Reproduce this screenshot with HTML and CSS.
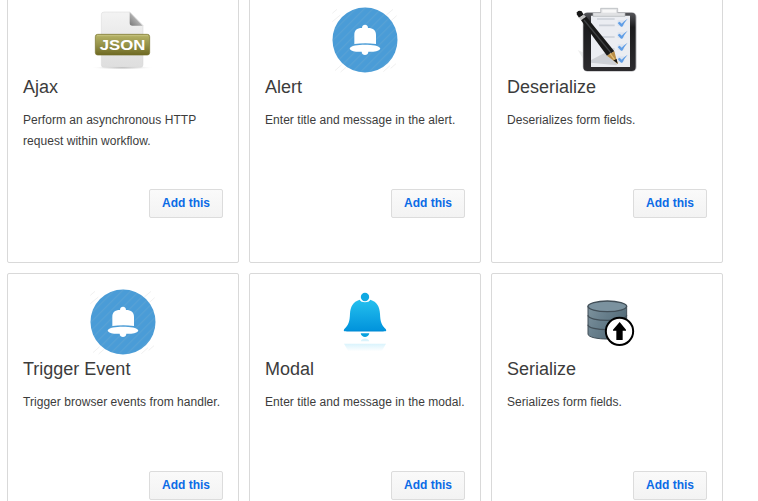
FILE: index.html
```html
<!DOCTYPE html>
<html lang="en">
<head>
<meta charset="utf-8">
<title>Components</title>
<link rel="stylesheet" href="styles.css">
</head>
<body>
<svg width="0" height="0" class="defs" aria-hidden="true">
  <defs>
    <linearGradient id="paper" x2="0" y2="1"><stop stop-color="#f3f3f3"/><stop offset="1" stop-color="#dedede"/></linearGradient>
    <linearGradient id="fold" x1="0" y1="1" x2="1" y2="0"><stop stop-color="#777"/><stop offset=".6" stop-color="#bbb"/></linearGradient>
    <linearGradient id="olive" x2="0" y2="1"><stop stop-color="#b8b567"/><stop offset=".5" stop-color="#96934a"/><stop offset="1" stop-color="#6e6923"/></linearGradient>
    <linearGradient id="cyan" x2="0" y2="1"><stop stop-color="#25c0ee"/><stop offset="1" stop-color="#0092dc"/></linearGradient>
    <linearGradient id="glow" x2="0" y2="1"><stop stop-color="#d9f3fc"/><stop offset="1" stop-color="#fff"/></linearGradient>
    <linearGradient id="steel" y2=".5"><stop stop-color="#7e939e"/><stop offset=".4" stop-color="#6a818e"/><stop offset="1" stop-color="#526a77"/></linearGradient>
    <linearGradient id="board" x2="0" y2="1"><stop stop-color="#55565a"/><stop offset=".25" stop-color="#1b1b1d"/><stop offset="1" stop-color="#2c2b2e"/></linearGradient>
    <radialGradient id="shade"><stop stop-color="#999"/><stop offset="1" stop-color="#fff" stop-opacity="0"/></radialGradient>
    <pattern id="stripes" width="18" height="18" patternUnits="userSpaceOnUse" patternTransform="rotate(45)"><path d="M5 0V18" stroke="#7caed0" stroke-width="3" opacity=".3"/></pattern>
    <g id="round-bell">
      <path d="M37 40l14-12M37 65l24-20M199 45l20-17M210 65l20-18M45 212l20-18M62 216l16-14M190 215l20-18M212 205l16-14" stroke="#f1f1f1" stroke-width="3"/>
      <circle cx="135" cy="120" r="97.5" fill="#4a9cd7"/>
      <circle cx="135" cy="120" r="97.5" fill="url(#stripes)"/>
      <path d="M126 84C126 71 144 71 144 84C160 84 168 91 168 105V132Q135 128 103 132V105C103 91 110 84 126 84Z" fill="#fff"/>
      <path d="M89 146C92 136 113 134 135 134S178 136 181 146C177 154 156 156 145 155C145 168 125 168 125 155C110 156 93 154 89 146Z" fill="#fff"/>
    </g>
    <path id="tick" d="M158 69L164 65L170 71Q178 62 188 56Q178 67 172 80L168 80Z" fill="#5f9de6"/>
  </defs>
</svg>
<main class="catalog">
  <article class="card">
    <svg class="icon" viewBox="-6 0 270 225">
      <ellipse cx="127" cy="203" rx="96" ry="6" fill="url(#shade)"/>
      <path d="M72 36H150L189 76V194Q189 202 181 202H72Q64 202 64 194V44Q64 36 72 36Z" fill="url(#paper)" stroke="#d7d7d7" stroke-width="1.5"/>
      <path d="M149 37L188 77H157Q149 77 149 69Z" fill="url(#fold)"/>
      <rect x="46" y="103" width="163" height="62" rx="7" fill="url(#olive)" stroke="#747028" stroke-width="2"/>
      <path d="M51 107H204" stroke="#cdca8a" stroke-width="3" opacity=".7"/>
      <text x="127.500" y="150" class="json-label" textLength="137" lengthAdjust="spacingAndGlyphs">JSON</text>
    </svg>
    <h2>Ajax</h2>
    <p>Perform an asynchronous HTTP request within workflow.</p>
    <button type="button">Add this</button>
  </article>
  <article class="card">
    <svg class="icon" viewBox="0 0 270 225"><use href="#round-bell"/></svg>
    <h2>Alert</h2>
    <p>Enter title and message in the alert.</p>
    <button type="button">Add this</button>
  </article>
  <article class="card">
    <svg class="icon" viewBox="-9 0 270 225">
      <path d="M38 150L60 160V185Z" fill="#eee"/>
      <rect x="53" y="37" width="162" height="178" rx="14" fill="#c6c6c9"/>
      <rect x="55" y="38" width="157" height="175" rx="12" fill="url(#board)"/>
      <path d="M78 47H195V201H78Z" fill="#ebedf2"/>
      <path d="M78 180L120 158L157 191L154 196L78 188Z" fill="#ced0d5"/>
      <path d="M96 57H149M102 76H149M105 111H149M118 147H149M80 184H149" stroke="#cbd0d8" stroke-width="5"/>
      <path d="M107 38V25H158V38H180V49H84V38Z" fill="#e0e1e3" stroke="#aeb0b3" stroke-width="2"/>
      <path d="M112 29H153V38H112Z" fill="#f7f7f7"/>
      <g><rect x="158" y="61" width="20" height="17" fill="#dbe3ef"/><rect x="158" y="97" width="20" height="17" fill="#dbe3ef"/><rect x="158" y="133" width="20" height="17" fill="#dbe3ef"/><rect x="158" y="169" width="20" height="17" fill="#dbe3ef"/></g>
      <use href="#tick"/><use href="#tick" y="36"/><use href="#tick" y="72"/><use href="#tick" y="108"/>
      <path d="M36 37Q41 30 50 34L56 44L42 53L35 43Z" fill="#171717"/>
      <path d="M42 53L57 44L63 51L48 61Z" fill="#c2c2c2"/>
      <path d="M48 61L64 50L148 154L126 167Z" fill="#191919"/>
      <path d="M57 60L139 160" stroke="#3f4143" stroke-width="4"/>
      <path d="M126 167L148 154L158 191Z" fill="#b98d45"/>
      <path d="M135 160L158 191" stroke="#e1bd75" stroke-width="4"/>
      <path d="M145 181L155 177L158 191Z" fill="#171717"/>
    </svg>
    <h2>Deserialize</h2>
    <p>Deserializes form fields.</p>
    <button type="button">Add this</button>
  </article>
  <article class="card">
    <svg class="icon" viewBox="0 0 270 225"><use href="#round-bell"/></svg>
    <h2>Trigger Event</h2>
    <p>Trigger browser events from handler.</p>
    <button type="button">Add this</button>
  </article>
  <article class="card">
    <svg class="icon" viewBox="0 6 270 225">
      <path d="M119 59C122 69 148 69 151 59C171 65 179 80 180 101C181 126 184 133 197 147C200 151 199 154 194 154H76C71 154 70 151 73 147C86 133 89 126 90 101C91 80 99 65 119 59Z" fill="url(#cyan)"/>
      <path d="M79 153H191" stroke="#0086cf" stroke-width="2"/>
      <circle cx="135" cy="51" r="12.500" fill="#10a9e2"/>
      <path d="M122 160H148C145 175 125 175 122 160Z" fill="#08a1df"/>
      <path d="M122 184C125 173 145 173 148 184Z" fill="#d9f3fc"/>
      <path d="M72 191H198L185 214H85Z" fill="url(#glow)"/>
    </svg>
    <h2>Modal</h2>
    <p>Enter title and message in the modal.</p>
    <button type="button">Add this</button>
  </article>
  <article class="card">
    <svg class="icon" viewBox="-9 6 270 225">
      <path d="M69 78V162C69 182 185 182 185 162V78Z" fill="url(#steel)" stroke="#424f58" stroke-width="3"/>
      <ellipse cx="127" cy="79" rx="58" ry="16" fill="#7b929f" stroke="#424f58" stroke-width="4"/>
      <path d="M69 106C69 126 185 126 185 106M69 134C69 154 185 154 185 134" fill="none" stroke="#424f58" stroke-width="4"/>
      <circle cx="163.500" cy="154" r="41" fill="#fff" stroke="#000" stroke-width="6"/>
      <path d="M164 126L183 149V152H173V180H154V152H144V149Z"/>
    </svg>
    <h2>Serialize</h2>
    <p>Serializes form fields.</p>
    <button type="button">Add this</button>
  </article>
</main>
</body>
</html>
```

FILE: styles.css
```css
* { box-sizing: border-box; }
html { overflow: hidden; background: #fff; }
body {
  margin: 0;
  height: 501px;
  overflow: hidden;
  color: #3c3c3c;
  font-family: "Liberation Sans", Arial, sans-serif;
}
.defs { position: absolute; }
.catalog {
  display: grid;
  grid-template-columns: repeat(3, 232px);
  grid-auto-rows: 272px;
  gap: 10px;
  margin: -9px 0 0 7px;
}
.card {
  display: flex;
  flex-direction: column;
  padding: 8px 15px 44px;
  border: 1px solid #d9d9d9;
  border-radius: 2px;
}
.icon {
  width: 90px;
  height: 75px;
  align-self: center;
  flex-shrink: 0;
}
.json-label {
  fill: #fff;
  font-size: 46px;
  font-weight: bold;
  text-anchor: middle;
}
h2 {
  margin: 0 0 10px;
  font-size: 18px;
  font-weight: 400;
  line-height: 25px;
}
p {
  margin: 0;
  font-size: 12px;
  line-height: 21px;
  letter-spacing: 0.04px;
}
button {
  width: 74px;
  height: 29px;
  margin-top: auto;
  align-self: flex-end;
  padding: 0 0 1px;
  border: 1px solid #dcdcdc;
  border-radius: 2px;
  background: linear-gradient(#fafafa, #f3f3f3);
  color: #0b6be6;
  font: bold 12px "Liberation Sans", Arial, sans-serif;
}
```
